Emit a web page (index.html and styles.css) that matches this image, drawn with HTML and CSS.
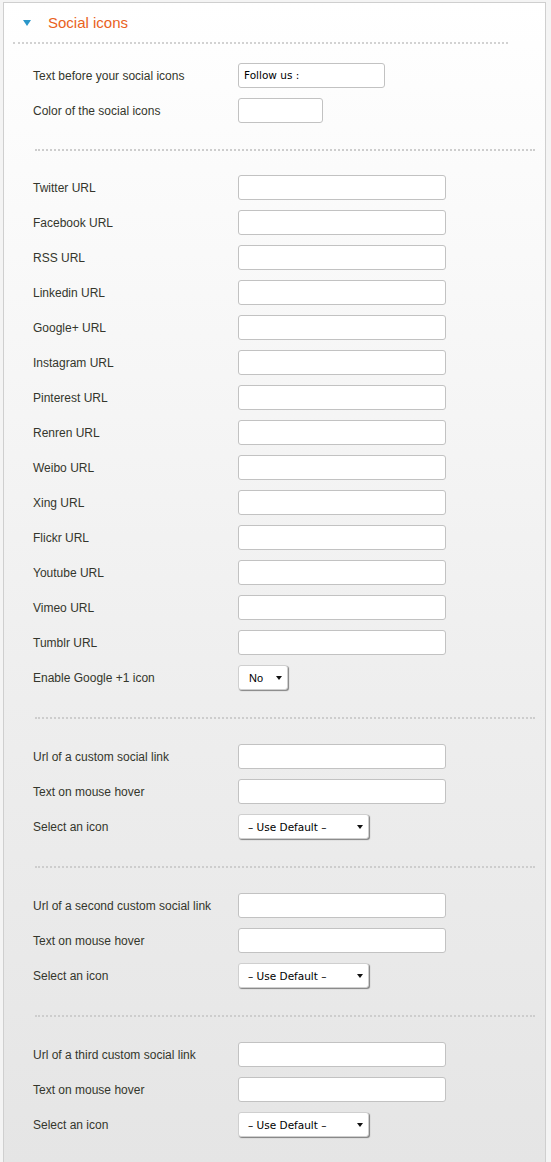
FILE: index.html
```html
<!DOCTYPE html>
<html>
<head>
<meta charset="utf-8">
<link rel="stylesheet" href="styles.css">
</head>
<body>
<div class="panel">
  <div class="panel-head">
    <span class="caret"></span>
    <span class="title">Social icons</span>
  </div>
  <div class="head-line"></div>

  <div class="group first">
    <div class="row"><label>Text before your social icons</label><div class="input mid">Follow us :</div></div>
    <div class="row"><label>Color of the social icons</label><div class="input small"></div></div>
  </div>
  <div class="sep"></div>

  <div class="group second">
    <div class="row"><label>Twitter URL</label><div class="input"></div></div>
    <div class="row"><label>Facebook URL</label><div class="input"></div></div>
    <div class="row"><label>RSS URL</label><div class="input"></div></div>
    <div class="row"><label>Linkedin URL</label><div class="input"></div></div>
    <div class="row"><label>Google+ URL</label><div class="input"></div></div>
    <div class="row"><label>Instagram URL</label><div class="input"></div></div>
    <div class="row"><label>Pinterest URL</label><div class="input"></div></div>
    <div class="row"><label>Renren URL</label><div class="input"></div></div>
    <div class="row"><label>Weibo URL</label><div class="input"></div></div>
    <div class="row"><label>Xing URL</label><div class="input"></div></div>
    <div class="row"><label>Flickr URL</label><div class="input"></div></div>
    <div class="row"><label>Youtube URL</label><div class="input"></div></div>
    <div class="row"><label>Vimeo URL</label><div class="input"></div></div>
    <div class="row"><label>Tumblr URL</label><div class="input"></div></div>
    <div class="row"><label>Enable Google +1 icon</label><div class="select no"><span class="opt">No</span><span class="arrow"></span></div></div>
  </div>
  <div class="sep"></div>

  <div class="group">
    <div class="row"><label>Url of a custom social link</label><div class="input"></div></div>
    <div class="row"><label>Text on mouse hover</label><div class="input"></div></div>
    <div class="row"><label>Select an icon</label><div class="select wide"><span class="opt">– Use Default –</span><span class="arrow"></span></div></div>
  </div>
  <div class="sep"></div>

  <div class="group">
    <div class="row"><label>Url of a second custom social link</label><div class="input"></div></div>
    <div class="row"><label>Text on mouse hover</label><div class="input"></div></div>
    <div class="row"><label>Select an icon</label><div class="select wide"><span class="opt">– Use Default –</span><span class="arrow"></span></div></div>
  </div>
  <div class="sep"></div>

  <div class="group">
    <div class="row"><label>Url of a third custom social link</label><div class="input"></div></div>
    <div class="row"><label>Text on mouse hover</label><div class="input"></div></div>
    <div class="row"><label>Select an icon</label><div class="select wide"><span class="opt">– Use Default –</span><span class="arrow"></span></div></div>
  </div>
</div>
</body>
</html>
```
FILE: styles.css
```css
html, body {
  margin: 0;
  padding: 0;
  background: #f4f4f4;
  height: 100%;
}
body {
  padding: 2px 0 0 3px;
  box-sizing: border-box;
  font-family: "Liberation Sans", Arial, sans-serif;
}
.panel {
  width: 543px;
  box-sizing: border-box;
  border: 1px solid #cfcfcf;
  border-bottom: none;
  min-height: 1160px;
  background: linear-gradient(to bottom, #ffffff 0%, #f8f8f8 25%, #eeeeee 60%, #e5e5e5 100%);
}
.panel-head {
  height: 39px;
  display: flex;
  align-items: center;
  padding-left: 19px;
}
.caret {
  width: 0;
  height: 0;
  border-left: 4px solid transparent;
  border-right: 4px solid transparent;
  border-top: 6px solid #2a96c9;
  margin-top: 1px;
  margin-right: 17px;
}
.title {
  color: #e9621c;
  font-size: 15px;
}
.head-line {
  margin: 0 37px 0 9px;
  border-top: 2px dotted #d2d2d2;
}
.sep {
  margin: 0 10px 0 31px;
  border-top: 2px dotted #cdcdcd;
}
.group {
  padding: 25px 0 27px 29px;
  display: flex;
  flex-direction: column;
  gap: 10px;
}
.group.first {
  padding-top: 19px;
  padding-bottom: 26px;
}
.group.second {
  padding-top: 24px;
  padding-bottom: 27px;
}
.row {
  display: flex;
  align-items: center;
  height: 25px;
}
label {
  width: 205px;
  font-size: 12px;
  color: #34362c;
  margin-top: 1px;
}
.input {
  width: 208px;
  height: 25px;
  box-sizing: border-box;
  border: 1px solid #c2c2c2;
  border-radius: 3px;
  background: #fff;
  color: #000;
  padding: 5px 5px;
  font-family: "DejaVu Sans", Verdana, sans-serif;
  font-size: 10.5px;
}
.input.mid { width: 147px; }
.input.small { width: 85px; }
.select {
  height: 25px;
  box-sizing: border-box;
  border: 1px solid #cfcfcf;
  border-radius: 3px;
  background: #fff;
  display: flex;
  align-items: center;
  justify-content: space-between;
  padding: 0 5px 0 9px;
  box-shadow: 1px 1px 1px rgba(0,0,0,0.45);
  font-family: "DejaVu Sans", Verdana, sans-serif;
  font-size: 10.5px;
  color: #000;
}
.select.no { width: 50px; padding-left: 10px; font-family: "Liberation Sans", Arial, sans-serif; font-size: 11px; }
.select.wide { width: 131px; }
.arrow {
  width: 0;
  height: 0;
  border-left: 3px solid transparent;
  border-right: 3px solid transparent;
  border-top: 4px solid #111;
}
```
